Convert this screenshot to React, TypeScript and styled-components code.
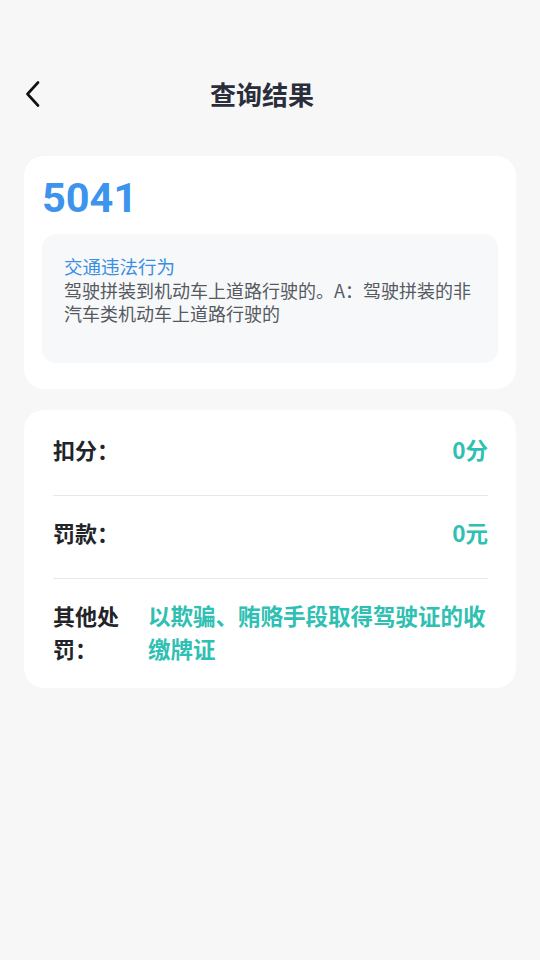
import React from "react";
import styled, { createGlobalStyle } from "styled-components";

const GlobalStyle = createGlobalStyle`
  html, body {
    margin: 0;
    padding: 0;
    background: #f7f7f8;
  }
  body {
    font-family: "Noto Sans CJK SC", "Noto Sans", sans-serif;
  }
  * { box-sizing: border-box; }
`;

const Page = styled.div`
  width: 540px;
  min-height: 960px;
  background: #f7f7f8;
  padding: 68px 24px 0;
  display: flex;
  flex-direction: column;
`;

const Header = styled.header`
  height: 52px;
  display: flex;
  align-items: center;
  margin-bottom: 36px;
`;

const BackButton = styled.button`
  width: 20px;
  height: 52px;
  padding: 0;
  margin-left: 1px;
  border: none;
  background: transparent;
  display: flex;
  align-items: center;
  color: #111;
  cursor: pointer;
`;

const Title = styled.h1`
  flex: 1;
  margin: 0;
  padding-right: 37px;
  text-align: center;
  font-family: "Noto Sans CJK SC", sans-serif;
  font-size: 26px;
  font-weight: 700;
  color: #2a2e3a;
  line-height: 52px;
`;

const Card = styled.section<{ $pad: string }>`
  background: #ffffff;
  border-radius: 20px;
  padding: ${(p) => p.$pad};
  margin-bottom: 21px;
`;

const Code = styled.div`
  font-family: Roboto, "Noto Sans", sans-serif;
  font-size: 41.5px;
  font-weight: 700;
  line-height: 52px;
  color: #3c94ec;
  margin-bottom: 10px;
`;

const InfoBox = styled.div`
  background: #f7f8fa;
  border-radius: 14px;
  padding: 20px 22px 38px;
`;

const InfoTitle = styled.div`
  font-size: 18.5px;
  line-height: 25px;
  color: #3b8fe2;
`;

const InfoText = styled.div`
  font-size: 18px;
  line-height: 23px;
  color: #555a60;
`;

const Row = styled.div<{ $last?: boolean }>`
  display: flex;
  align-items: flex-start;
  padding: 20px 0 ${(p) => (p.$last ? "23px" : "29px")};
  border-bottom: ${(p) => (p.$last ? "none" : "1px solid #e8e8ea")};
`;

const Label = styled.div`
  width: 80px;
  flex-shrink: 0;
  margin-right: 15px;
  font-size: 22px;
  font-weight: 700;
  line-height: 33px;
  color: #222428;
`;

const Value = styled.div<{ $align: "left" | "right" }>`
  flex: 1;
  text-align: ${(p) => p.$align};
  font-size: 22.5px;
  font-weight: 700;
  line-height: 33px;
  color: #2ec0b2;
`;

const ChevronLeft = () => (
  <svg width="16" height="26" viewBox="0 0 16 26" fill="none">
    <path
      d="M13 1.5 L2.5 13 L13 24.5"
      stroke="#111"
      strokeWidth="2.6"
      strokeLinecap="round"
      strokeLinejoin="round"
    />
  </svg>
);

const rows = [
  { label: "扣分：", value: "0分", align: "right" as const },
  { label: "罚款：", value: "0元", align: "right" as const },
  {
    label: "其他处罚：",
    value: "以欺骗、贿赂手段取得驾驶证的收缴牌证",
    align: "left" as const,
  },
];

export default function App() {
  return (
    <>
      <GlobalStyle />
      <Page>
        <Header>
          <BackButton aria-label="返回">
            <ChevronLeft />
          </BackButton>
          <Title>查询结果</Title>
        </Header>

        <Card $pad="16px 18px 26px">
          <Code>5041</Code>
          <InfoBox>
            <InfoTitle>交通违法行为</InfoTitle>
            <InfoText>
              驾驶拼装到机动车上道路行驶的。A：驾驶拼装的非汽车类机动车上道路行驶的
            </InfoText>
          </InfoBox>
        </Card>

        <Card $pad="3px 28px 0 29px">
          {rows.map((r, i) => (
            <Row key={r.label} $last={i === rows.length - 1}>
              <Label>{r.label}</Label>
              <Value $align={r.align}>{r.value}</Value>
            </Row>
          ))}
        </Card>
      </Page>
    </>
  );
}
